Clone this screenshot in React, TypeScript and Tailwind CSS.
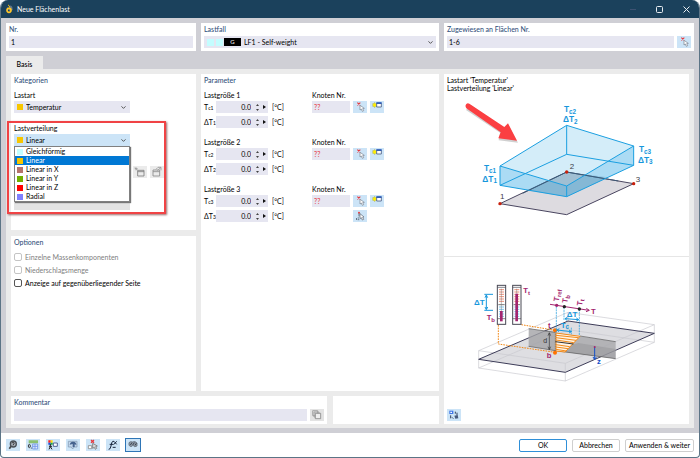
import { useState } from 'react';
import type { ReactNode } from 'react';
import { ChevronDown } from 'lucide-react';

const distributions = [
  { name: 'Gleichförmig', swatch: 'bg-[#c4fdff]' },
  { name: 'Linear', swatch: 'bg-[#f7c600]' },
  { name: 'Linear in X', swatch: 'bg-[#b5746c]' },
  { name: 'Linear in Y', swatch: 'bg-[#72b000]' },
  { name: 'Linear in Z', swatch: 'bg-[#ff0000]' },
  { name: 'Radial', swatch: 'bg-[#8080ff]' },
];

function Card({ className = '', children }: { className?: string; children?: ReactNode }) {
  return <section className={`bg-white px-[3px] pt-px ${className}`}>{children}</section>;
}

function CardTitle({ children }: { children: ReactNode }) {
  return <h2 className="h-[10px] font-medium text-[#34527c]">{children}</h2>;
}

function ToolButton({ label, children, className = 'bg-[#cce4f7]' }: { label: string; children: ReactNode; className?: string }) {
  return (
    <button type="button" aria-label={label} className={`flex h-3 w-[14px] shrink-0 items-center justify-center ${className}`}>
      <svg viewBox="0 0 42 36" className="h-3 w-[14px]" fill="none" strokeWidth="2.5">
        {children}
      </svg>
    </button>
  );
}

function PickIcon() {
  return (
    <>
      <path d="M13 5l9 8M22 5l-9 8" stroke="#e8383d" strokeWidth="3.5" />
      <path d="M21 13v14l4-3 3 7 4-2-3-6 5-1z" fill="#fff" stroke="#77808c" strokeWidth="2" />
    </>
  );
}

function NewNodeIcon() {
  return (
    <>
      <path d="M6 12h16M14 4v16M8 6l12 12M20 6L8 18" stroke="#a5a100" strokeWidth="2" />
      <circle cx="14" cy="12" r="5" fill="#ffee00" />
      <path d="M20 7h14v11H20z" fill="#fff" stroke="#4a5f86" strokeWidth="2.5" />
      <path d="M19 6h16" stroke="#1d4fb5" strokeWidth="4" />
    </>
  );
}

function SpinRow({ symbol, sub, children }: { symbol: string; sub: string; children?: ReactNode }) {
  const [value, setValue] = useState('0.0');
  const step = (d: number) => setValue((v) => (Number(v) + d).toFixed(1));
  return (
    <div className="flex h-3 items-center">
      <label htmlFor={symbol + sub} className="w-3 shrink-0 leading-none whitespace-nowrap">
        {symbol}
        <span className="text-[5px]">{sub}</span>
      </label>
      <div className="flex h-full w-[52px] items-center bg-[#e6e6f1]">
        <input
          id={symbol + sub}
          value={value}
          onChange={(e) => setValue(e.target.value)}
          className="h-full w-[35px] bg-transparent text-right outline-none"
        />
        <div className="ml-[5px] flex flex-col gap-[3px]">
          <button type="button" aria-label="Erhöhen" onClick={() => step(0.1)}>
            <svg viewBox="0 0 3 2" className="block h-[2px] w-[3px]"><path d="M0 2l1.500-2 1.500 2z" fill="#444" /></svg>
          </button>
          <button type="button" aria-label="Verringern" onClick={() => step(-0.1)}>
            <svg viewBox="0 0 3 2" className="block h-[2px] w-[3px]"><path d="M0 0l1.500 2 1.500-2z" fill="#444" /></svg>
          </button>
        </div>
        <button type="button" aria-label="Mehr" className="ml-1">
          <svg viewBox="0 0 3 4" className="block h-1 w-[3px]"><path d="M0 0l3 2-3 2z" fill="#111" /></svg>
        </button>
      </div>
      <span className="ml-1 w-10 leading-none">[°C]</span>
      {children}
    </div>
  );
}

function LoadSize({ n }: { n: string }) {
  return (
    <div>
      <div className="flex h-[11px] leading-[10px]">
        <h3 className="w-[108px]">Lastgröße {n}</h3>
        <label htmlFor={`knoten${n}`}>Knoten Nr.</label>
      </div>
      <div className="flex flex-col gap-[3px]">
        <SpinRow symbol="T" sub={`c${n}`}>
          <input id={`knoten${n}`} defaultValue="??" className="h-3 w-[38px] bg-[#e6e6f1] px-[2px] text-[#e8383d] outline-none" />
          <div className="ml-[3px] flex gap-[3px]">
            <ToolButton label="Knoten wählen"><PickIcon /></ToolButton>
            <ToolButton label="Neuer Knoten"><NewNodeIcon /></ToolButton>
          </div>
        </SpinRow>
        <SpinRow symbol="ΔT" sub={n}>
          {n === '3' && (
            <div className="ml-[41px]">
              <ToolButton label="Drei Knoten wählen">
                <path d="M9 24l3 3-3 3M14 24h4M14 29h5" stroke="#333f50" strokeWidth="2" />
                <circle cx="18" cy="8" r="3" fill="#e8383d" />
                <path d="M18 10v9" stroke="#333f50" strokeWidth="2" />
                <path d="M21 11v15l4-3 3 7 4-2-3-6 4-1z" fill="#fff" stroke="#59616e" strokeWidth="2" />
              </ToolButton>
            </div>
          )}
        </SpinRow>
      </div>
    </div>
  );
}

function LoadPreview() {
  return (
    <svg viewBox="12 6 735 474" className="block w-full font-[Liberation_Sans,sans-serif]" role="img" aria-label="Temperaturlast, linear">
      <path d="M180 341L380 246L581 281L380 374z" fill="#dddbe0" stroke="#4a4660" strokeWidth="3" />
      <path d="M180 228L380 106L581 168L581 226L380 320L180 286z" fill="#4db3e8" fillOpacity=".24" />
      <path d="M180 228L380 288L581 168V226L380 320L180 286z" fill="#4db3e8" fillOpacity=".3" />
      <path d="M248 310L380 246L535 273" fill="none" stroke="#3f5875" strokeWidth="3" />
      <path d="M262 302L380 246L505 262L380 320z" fill="#2f6f98" fillOpacity=".18" />
      <g fill="none" stroke="#1b9fe0" strokeWidth="3" strokeLinejoin="round">
        <path d="M180 228L380 106L581 168L380 288z" />
        <path d="M180 286L380 193L581 226L380 320z" />
        <path d="M180 228V286M380 106V193M581 168V226M380 288V320" />
      </g>
      <g fill="#c8200c">
        <circle cx="180" cy="341" r="5" />
        <circle cx="380" cy="246" r="5" />
        <circle cx="581" cy="281" r="5" />
      </g>
      <g fill="#3d3d4a" fontSize="24">
        <text x="180" y="327">1</text>
        <text x="389" y="237">2</text>
        <text x="587" y="275">3</text>
      </g>
      <g fill="#1797dc" fontSize="25" fontWeight="bold">
        <text x="372" y="66">T<tspan fontSize="19" dy="5">c2</tspan></text>
        <text x="369" y="96">ΔT<tspan fontSize="19" dy="5">2</tspan></text>
        <text x="597" y="187">T<tspan fontSize="19" dy="5">c3</tspan></text>
        <text x="594" y="218">ΔT<tspan fontSize="19" dy="5">3</tspan></text>
        <text x="132" y="244">T<tspan fontSize="19" dy="5">c1</tspan></text>
        <text x="127" y="275">ΔT<tspan fontSize="19" dy="5">1</tspan></text>
      </g>
      <path d="M78 60L180 128L176 151L234 158L205 104L190 115L92 44z" fill="#777" fillOpacity=".35" />
      <path d="M88 41L193 111L204 100L231 152L175 145L182 127L79 55Q74 48 79 42Q83 38 88 41z" fill="#fb3f42" />
    </svg>
  );
}

function Thermometer({ x, top }: { x: number; top: number }) {
  return (
    <g>
      <rect x={x} y="91" width="25" height="117" fill="#fff" stroke="#4a4a55" strokeWidth="3" />
      <path d={`M${x} 97h25M${x} 191h25`} stroke="#4a4a55" strokeWidth="2" />
      <path d={`M${x + 5} 104h15M${x + 5} 111h15M${x + 5} 118h15M${x + 5} 125h15M${x + 5} 132h15M${x + 5} 139h15`} stroke="#f0907a" strokeWidth="3" />
      <path d={`M${x + 5} 156h15M${x + 5} 163h15M${x + 5} 170h15M${x + 5} 177h15M${x + 5} 184h15`} stroke="#7cc6ef" strokeWidth="3" />
      <path d={`M${x + 3} 149h19`} stroke="#333" strokeWidth="2" />
      <path d={`M${x + 12} 101V${top}`} stroke="#777" strokeWidth="1.5" />
      <path d={`M${x + 12} ${top}V199`} stroke="#a3256f" strokeWidth="8" />
    </g>
  );
}

function SectionPreview() {
  return (
    <svg viewBox="-3 6 735 378" className="block w-full font-[Liberation_Sans,sans-serif]" role="img" aria-label="Temperaturverlauf im Querschnitt">
      <path d="M101 313L369 198L628 235L361 352z" fill="#dedee2" />
      <g fill="none" stroke="#c9c9ce" strokeWidth="2">
        <path d="M101 287L369 172L628 209L361 325zM101 339L361 378L628 262V209M101 287V339M361 325V378M369 172V224L101 339M369 224L628 262" />
      </g>
      <path d="M101 313L369 198L628 235L361 352z" fill="none" stroke="#3d3c58" strokeWidth="3" />
      <path d="M251 221L331 232V287L251 274z" fill="#a3a3a6" fillOpacity=".8" />
      <path d="M331 233L512 260V311L331 287z" fill="#a8a8ab" fillOpacity=".8" />
      <path d="M400 264L512 282V311L331 287V285z" fill="#77777a" fillOpacity=".25" />
      <path d="M251 221L331 232M251 274L331 287M405 243L512 260M331 287L512 311" stroke="#555" strokeWidth="2" />
      <path d="M333 234L405 244L360 291L333 288z" fill="#fff4e6" stroke="#f28a1a" strokeWidth="3" />
      <path d="M333 241L400 248M333 248L393 256M333 255L386 263M333 269L374 275M333 276L369 281M333 283L364 288" stroke="#f28a1a" strokeWidth="3" />
      <path d="M331 260L385 267" stroke="#333" strokeWidth="3" />
      <path d="M229 209L331 226M160 210V267L331 292" fill="none" stroke="#f28a1a" strokeWidth="3" strokeDasharray="5 3" />
      <path d="M331 226V292" stroke="#555" strokeWidth="2" strokeDasharray="3 3" />
      <circle cx="330" cy="226" r="6" fill="#ff7300" />
      <circle cx="330" cy="293" r="6" fill="#ff7300" />
      <path d="M313 234V283M309 242l4-9 4 9M309 275l4 9 4-9" fill="none" stroke="#333" strokeWidth="2" />
      <Thermometer x={157} top={168} />
      <Thermometer x={203} top={116} />
      <g fill="none" stroke="#1797dc" strokeWidth="3">
        <path d="M118 118h26M118 166h26M124 121V163M120 128l4-8 4 8M120 156l4 8 4-8" />
        <path d="M334 155V234M357 157V197M403 162V242M379 218V238" strokeWidth="2" strokeDasharray="6 2" />
        <path d="M360 191L401 194M367 187l-7 4 6 5M394 189l7 5-7 4" />
        <path d="M336 225L379 230M343 221l-7 4 6 5M372 225l7 5-7 4" />
      </g>
      <path d="M315 148L432 166M424 160l9 6-10 4" fill="none" stroke="#a3256f" strokeWidth="3" />
      <circle cx="335" cy="151" r="5" fill="#a3256f" />
      <circle cx="358" cy="155" r="5" fill="#222" />
      <circle cx="403" cy="162" r="5" fill="#222" />
      <path d="M449 276V312M444 306l5 8 5-8" fill="none" stroke="#1450c8" strokeWidth="3" />
      <circle cx="449" cy="276" r="3" fill="#a3256f" />
      <g fontSize="24" fontWeight="bold" fill="#1797dc">
        <text x="87" y="151">ΔT</text>
        <text x="365" y="185">ΔT</text>
        <text x="347" y="218">T<tspan fontSize="19" dy="5">c</tspan></text>
      </g>
      <g fontSize="23" fontWeight="bold" fill="#a3256f">
        <text x="235" y="115">T<tspan fontSize="18" dy="4">t</tspan></text>
        <text x="125" y="195">T<tspan fontSize="18" dy="5">b</tspan></text>
        <text x="438" y="176">T</text>
        <text x="309" y="218">t</text>
        <text x="305" y="308">b</text>
        <text transform="translate(341 140) rotate(-82)">T<tspan fontSize="18" dy="5">ref</tspan></text>
        <text transform="translate(367 145) rotate(-82)">T<tspan fontSize="18" dy="5">b</tspan></text>
        <text transform="translate(411 153) rotate(-82)">T<tspan fontSize="18" dy="5">t</tspan></text>
      </g>
      <text x="295" y="265" fontSize="21" fill="#333">d</text>
      <text x="456" y="327" fontSize="23" fontWeight="bold" fill="#1450c8">z</text>
    </svg>
  );
}

function Toolbar() {
  return (
    <div className="flex gap-[6px]">
      <ToolButton label="Hilfe">
        <path d="M15 22l-5 7" stroke="#444" strokeWidth="5" />
        <circle cx="22" cy="15" r="9" fill="#aab2bc" stroke="#4a5058" strokeWidth="4" />
        <path d="M18 13q1-4 5-3 4 2 0 5l-2 4" stroke="#222" />
      </ToolButton>
      <ToolButton label="Einheiten und Dezimalstellen">
        <path d="M8 4h28v9H8z" fill="#8cc070" />
        <path d="M20 15h15v15H20z" fill="#dfe9fc" stroke="#6e93e8" />
        <path d="M20 22h15M27 15v15" stroke="#6e93e8" />
        <ellipse cx="10" cy="21" rx="3" ry="5" stroke="#222" />
        <circle cx="16" cy="27" r="1.5" fill="#222" />
      </ToolButton>
      <ToolButton label="Farben">
        <path d="M7 4h7v7H7z" fill="#ff2020" />
        <path d="M14 4h6v7h-6z" fill="#ffdd00" />
        <path d="M7 11h7v6H7z" fill="#2050e0" />
        <path d="M14 11h6v6h-6z" fill="#20b040" />
        <path d="M13 15v8l-4 8M13 23l5 8M9 22h9" stroke="#222" strokeWidth="3" />
        <path d="M22 12h12v10H22z" fill="#fff" stroke="#3a4d80" />
      </ToolButton>
      <ToolButton label="Ansicht">
        <path d="M7 7h26v17H24l-4 6-4-6H7z" fill="#c3d7ec" stroke="#8aa0b8" />
        <path d="M11 17q2-10 11-9 9 1 9 10l-5-2v8h-6v-9z" fill="#46638e" />
      </ToolButton>
      <ToolButton label="Auswahl aufheben">
        <path d="M15 3l9 8M24 3l-9 8" stroke="#e8383d" strokeWidth="4" />
        <path d="M7 20h10v9H7z" fill="#fff" stroke="#8a8a8a" />
        <path d="M20 13v15l5-3 3 6 4-3-3-5 5-2z" fill="#ddd" stroke="#777" />
      </ToolButton>
      <ToolButton label="Formel">
        <path d="M8 31q5 1 7-10l2-9q2-7 7-5M11 16h11" stroke="#17233c" strokeWidth="3" />
        <path d="M24 7l8 9M32 7l-9 10" stroke="#17233c" strokeWidth="3" />
        <path d="M20 25h9" stroke="#17233c" strokeWidth="3" />
      </ToolButton>
      <ToolButton label="Kommentare" className="bg-[#cce4f7] outline outline-[#2e75b6]">
        <path d="M9 11q4-5 10-2 8-4 14 3v9l-7 2-5-4-6 4-6-4z" fill="#8c98a6" stroke="#626d79" />
        <path d="M13 18l5-7M20 18l5-7M27 19l4-6" stroke="#2b333d" />
      </ToolButton>
    </div>
  );
}

export default function App() {
  const [distribution, setDistribution] = useState('Linear');
  const [open, setOpen] = useState(true);
  const current = distributions.find((d) => d.name === distribution) ?? distributions[1];

  return (
    <main className="flex min-h-screen flex-col overflow-hidden rounded-t-lg rounded-b-sm border border-t-0 border-[#5c7486] bg-white font-[Lato,sans-serif] text-[7px] leading-[10px] text-black">
      <header className="flex h-[18px] items-center bg-[#1b415c] pr-[9px] pl-1 text-white">
        <svg viewBox="0 0 27 30" className="mr-[3px] h-[10px] w-[9px]" fill="none">
          <path d="M5 8l8 4 4-8 5 5 1 9-9 3z" fill="#64798c" />
          <path d="M9 3q5 1 5 8" stroke="#f2bd1d" strokeWidth="3" />
          <circle cx="12" cy="19" r="6" stroke="#ffc629" strokeWidth="5" />
        </svg>
        <h1 className="grow">Neue Flächenlast</h1>
        <div className="flex items-center gap-5">
          <button type="button" aria-label="Minimieren" disabled>
            <svg viewBox="0 0 6 7" className="block h-[7px] w-[6px]"><path d="M0 3.5h6" stroke="#3d5272" /></svg>
          </button>
          <button type="button" aria-label="Maximieren">
            <svg viewBox="0 0 7 7" className="block size-[7px]" fill="none"><rect x=".5" y=".5" width="6" height="6" rx="1" stroke="#e8edf2" /></svg>
          </button>
          <button type="button" aria-label="Schließen">
            <svg viewBox="0 0 7 7" className="block size-[7px]"><path d="M.5.5l6 6M6.500.5l-6 6" stroke="#e8edf2" /></svg>
          </button>
        </div>
      </header>

      <div className="flex grow flex-col bg-[#cfcfd5] px-[5px] py-[5px]">
        <div className="grid grid-cols-[190fr_238fr_250fr] gap-[5px]">
          <Card className="pb-[3px]">
            <label htmlFor="nr" className="block font-medium text-[#34527c]">Nr.</label>
            <input id="nr" defaultValue="1" className="mt-[2px] block h-3 w-full bg-[#e6e6f1] px-[2px] outline-none" />
          </Card>
          <Card className="pb-[3px]">
            <label htmlFor="lastfall" className="block font-medium text-[#34527c]">Lastfall</label>
            <div className="mt-[2px] flex h-3 items-center bg-[#e6e6f1] pr-[2px] pl-[3px]">
              <span className="size-[7px] bg-[#c4fdff]" />
              <span className="ml-[2px] size-[7px] bg-[#c4fdff]" />
              <span className="ml-px h-2 w-[17px] bg-black text-center text-[6px] leading-2 text-white">G</span>
              <select id="lastfall" className="ml-[3px] h-full grow appearance-none bg-transparent outline-none">
                <option>LF1 - Self-weight</option>
              </select>
              <ChevronDown className="size-[7px] text-[#444]" strokeWidth={3} />
            </div>
          </Card>
          <Card className="pb-[3px]">
            <label htmlFor="flaechen" className="block font-medium text-[#34527c]">Zugewiesen an Flächen Nr.</label>
            <div className="mt-[2px] flex gap-[3px]">
              <input id="flaechen" defaultValue="1-6" className="h-3 min-w-0 grow bg-[#e6e6f1] px-[2px] outline-none" />
              <ToolButton label="Flächen wählen"><PickIcon /></ToolButton>
            </div>
          </Card>
        </div>

        <nav className="mt-[5px] flex" role="tablist">
          <button type="button" role="tab" aria-selected="true" className="h-[13px] w-[37px] bg-[#ebebeb] pt-[2px] font-medium">
            Basis
          </button>
        </nav>

        <div className="grid grow grid-cols-[428fr_245fr] gap-[5px] bg-[#ebebeb] px-[5px] pt-[5px] pb-1">
          <div className="flex flex-col gap-[5px]">
            <div className="grid grow grid-cols-[185fr_238fr] gap-[5px]">
              <div className="flex flex-col gap-[6px]">
                <Card className="pb-5">
                  <CardTitle>Kategorien</CardTitle>
                  <label htmlFor="lastart" className="mt-[5px] block h-[11px]">Lastart</label>
                  <div className="flex h-3 w-[116px] items-center bg-[#e6e6f1] px-[3px]">
                    <span className="size-[6px] bg-[#f7c600]" />
                    <select id="lastart" className="ml-[3px] h-full grow appearance-none bg-transparent outline-none">
                      <option>Temperatur</option>
                    </select>
                    <ChevronDown className="size-[7px] text-[#444]" strokeWidth={3} />
                  </div>

                  <div className="relative mt-[10px]">
                    <label htmlFor="verteilung" className="block h-[11px]">Lastverteilung</label>
                    <div className="relative w-[116px]">
                      <div className="flex h-3 items-center bg-[#cce4f7] px-[3px]">
                        <span className={`size-[6px] ${current.swatch}`} />
                        <select
                          id="verteilung"
                          value={distribution}
                          onChange={(e) => setDistribution(e.target.value)}
                          onMouseDown={(e) => {
                            e.preventDefault();
                            setOpen(!open);
                          }}
                          className="ml-[3px] h-full grow appearance-none bg-transparent outline-none"
                        >
                          {distributions.map((d) => (
                            <option key={d.name}>{d.name}</option>
                          ))}
                        </select>
                        <ChevronDown className="size-[7px] text-[#444]" strokeWidth={3} />
                      </div>
                      {open && (
                        <ul role="listbox" aria-label="Lastverteilung" className="absolute top-full left-0 z-10 w-full border border-[#808080] bg-white shadow-[1px_1px_1px_#777]">
                          {distributions.map((d) => (
                            <li
                              key={d.name}
                              role="option"
                              aria-selected={d.name === distribution}
                              onClick={() => {
                                setDistribution(d.name);
                                setOpen(false);
                              }}
                              className={`flex h-[9px] items-center gap-[3px] px-[2px] leading-[9px] ${d.name === distribution ? 'bg-[#0078d4] text-white' : ''}`}
                            >
                              <span className={`size-[6px] ${d.swatch}`} />
                              {d.name}
                            </li>
                          ))}
                        </ul>
                      )}
                    </div>
                    <div className="mt-5 flex gap-[3px]">
                      <div className="h-[44px] w-[116px] bg-[#e3e3e3]" />
                      <ToolButton label="Neu" className="bg-[#ebebeb]">
                        <path d="M14 13h19v17H14zM14 17h19" stroke="#7d7d7d" />
                        <path d="M5 8h9M9 4v9M6 5l7 7" stroke="#9a9a9a" />
                      </ToolButton>
                      <ToolButton label="Bearbeiten" className="bg-[#ebebeb]">
                        <path d="M9 12h20v18H9zM9 17h20" stroke="#8a8a8a" />
                        <path d="M18 10l6-6M24 4h9v9M33 4L22 14" stroke="#999" />
                      </ToolButton>
                    </div>
                    {/* red callout frame around the open list */}
                    <div className="pointer-events-none absolute -top-[2px] -bottom-[4px] -left-[7px] z-20 w-[159px] border-2 border-[#f04345] shadow-[1px_1px_2px_#9a6a6a]" />
                  </div>
                </Card>
                <Card className="grow">
                  <CardTitle>Optionen</CardTitle>
                  <div className="mt-[5px] flex flex-col gap-[3px]">
                    {['Einzelne Massenkomponenten', 'Niederschlagsmenge'].map((name) => (
                      <label key={name} className="flex h-[10px] items-center gap-[3px] text-[#808080]">
                        <input type="checkbox" disabled className="size-2 appearance-none rounded-[2px] border border-[#c4c4c4]" />
                        {name}
                      </label>
                    ))}
                    <label className="flex h-[10px] items-center gap-[3px]">
                      <input type="checkbox" className="size-2 appearance-none rounded-[2px] border border-[#555] checked:bg-[#0078d4]" />
                      Anzeige auf gegenüberliegender Seite
                    </label>
                  </div>
                </Card>
              </div>

              <Card>
                <CardTitle>Parameter</CardTitle>
                <div className="mt-[5px] flex flex-col gap-[9px]">
                  <LoadSize n="1" />
                  <LoadSize n="2" />
                  <LoadSize n="3" />
                </div>
              </Card>
            </div>

            <div className="grid grid-cols-[316fr_106fr] gap-[6px]">
              <Card className="pb-[3px]">
                <label htmlFor="kommentar" className="block font-medium text-[#34527c]">Kommentar</label>
                <div className="mt-[2px] flex gap-[3px]">
                  <input id="kommentar" className="h-3 min-w-0 grow bg-[#e6e6f1] px-[2px] outline-none" />
                  <ToolButton label="Kommentar übernehmen" className="bg-[#e3e3e3]">
                    <path d="M8 5h15v15H8zM12 9h15v15H12z" fill="#ddd" stroke="#9a9a9a" />
                    <path d="M16 13h16v16H16z" fill="#eee" stroke="#888" />
                  </ToolButton>
                </div>
              </Card>
              <Card />
            </div>
          </div>

          <div className="flex flex-col bg-white">
            <div className="border-b border-[#e6e6e6] pt-[2px] pb-[6px]">
              <p className="px-[3px] leading-2">
                Lastart 'Temperatur'
                <br />
                Lastverteilung 'Linear'
              </p>
              <LoadPreview />
            </div>
            <SectionPreview />
            <div className="mt-auto p-[3px]">
              <ToolButton label="Darstellung wechseln">
                <path d="M7 5h12v10H7z" fill="#3f75e6" />
                <path d="M10 8h5v4h-5z" fill="#fff" />
                <path d="M11 19v9M25 8v6M30 11v8M15 25l4 4" stroke="#33415c" strokeWidth="3" />
                <path d="M22 20l10-2 2 10-9 1z" fill="#47597c" />
              </ToolButton>
            </div>
          </div>
        </div>
      </div>

      <footer className="flex h-6 items-center justify-between px-[5px]">
        <Toolbar />
        <div className="flex gap-[5px]">
          <button type="button" className="h-[13px] w-12 rounded-[2px] border border-[#2f8fd8]">OK</button>
          <button type="button" className="h-[13px] w-12 rounded-[2px] border border-[#cfcfcf]">Abbrechen</button>
          <button type="button" className="h-[13px] w-[69px] rounded-[2px] border border-[#cfcfcf]">Anwenden &amp; weiter</button>
        </div>
      </footer>
    </main>
  );
}
